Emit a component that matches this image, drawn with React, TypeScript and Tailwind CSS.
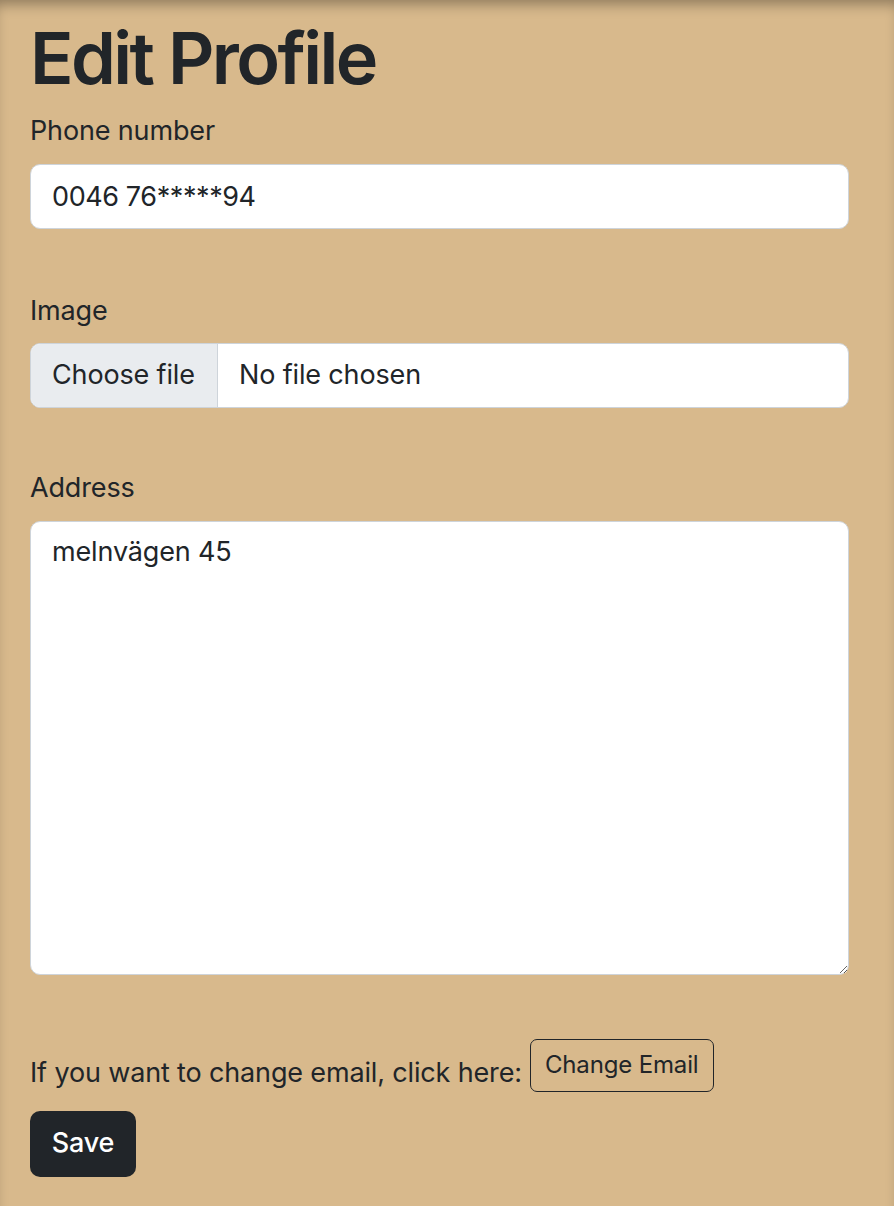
import React from "react";

const font = { fontFamily: "Inter, Roboto, 'Liberation Sans', sans-serif" };

export default function App() {
  return (
    <div
      className="min-h-[1206px] w-full bg-[#d8b98c] text-[#212529] tracking-[-0.15px] shadow-[inset_0_10px_14px_-6px_rgba(0,0,0,0.35)]"
      style={font}
    >
      <div className="pl-[30px] pr-[45px] pt-[14px]">
        <h1 className="text-[72px] font-semibold leading-[88px] tracking-[-2.6px]">
          Edit Profile
        </h1>

        <form className="mt-[9px]" onSubmit={(e) => e.preventDefault()}>
          {/* phone */}
          <label className="block text-[27px] leading-[1.5] mb-[12px]">
            Phone number
          </label>
          <input
            type="text"
            defaultValue="0046 76*****94"
            className="block w-full h-[65px] px-[21px] text-[27px] leading-[1.5] tracking-[-0.4px] bg-white border border-[#ced4da] rounded-[10px] outline-none"
          />

          {/* image */}
          <label className="block mt-[62px] text-[27px] leading-[1.5] mb-[12px]">
            Image
          </label>
          <div className="flex h-[65px] w-full bg-white border border-[#ced4da] rounded-[10px] overflow-hidden text-[27px] leading-[1.5]">
            <span className="flex items-center w-[187px] px-[21px] bg-[#e9ecef] border-r border-[#ced4da]">
              Choose file
            </span>
            <span className="flex items-center pl-[21px]">No file chosen</span>
          </div>

          {/* address */}
          <label className="block mt-[60px] text-[27px] leading-[1.5] mb-[12px]">
            Address
          </label>
          <textarea
            defaultValue="melnvägen 45"
            className="block w-full h-[454px] px-[21px] py-[10px] text-[27px] leading-[1.5] bg-white border border-[#ced4da] rounded-[10px] outline-none resize-y"
          />

          <div className="flex items-end mt-[64px]">
            <span className="text-[27px] leading-[1.5]">
              If you want to change email, click here:
            </span>
            <button
              type="button"
              className="ml-[8px] mb-[2px] h-[53px] px-[14px] text-[24px] leading-[1.5] border border-[#212529] rounded-[7px]"
            >
              Change Email
            </button>
          </div>

          <button
            type="submit"
            className="mt-[17px] flex items-center justify-center w-[106px] h-[66px] bg-[#212529] text-white text-[27px] font-medium rounded-[10px]"
          >
            Save
          </button>
        </form>
      </div>
    </div>
  );
}
